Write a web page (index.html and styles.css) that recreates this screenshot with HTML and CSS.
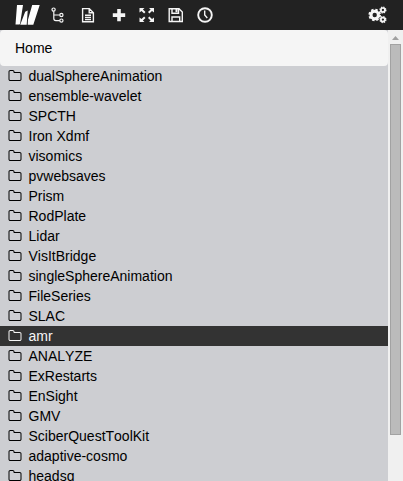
FILE: index.html
```
<!DOCTYPE html>
<html lang="en">
<head>
<meta charset="utf-8">
<title>Files</title>
<link rel="stylesheet" href="styles.css">
</head>
<body>
<svg class="defs" aria-hidden="true">
  <symbol id="folder" viewBox="0 0 1792 1792"><path d="M1600 1312v-704q0-40-28-68t-68-28h-704q-40 0-68-28t-28-68v-64q0-40-28-68t-68-28h-320q-40 0-68 28t-28 68v960q0 40 28 68t68 28h1216q40 0 68-28t28-68zm128-704v704q0 92-66 158t-158 66h-1216q-92 0-158-66t-66-158v-960q0-92 66-158t158-66h320q92 0 158 66t66 158v32h672q92 0 158 66t66 158z"/></symbol>
</svg>
<header class="toolbar">
  <svg class="logo" viewBox="0 0 26 20"><path d="M2 0H8L5.200 18.300 4.600 19.500H.5zM10.200 6.800L12.700 5.500 11.700 19.700H5.200zM17.200 0H24.700L18.300 19.700H12.700L12.900 15z"/></svg>
  <svg class="icon tree" viewBox="0 0 14 16"><g class="line"><circle cx="2.600" cy="2.600" r="1.600"/><circle cx="10.400" cy="8" r="1.600"/><circle cx="10.400" cy="13.600" r="1.600"/><path d="M2.800 4.300v7.300q0 2 2 2h4M2.800 8h6"/></g></svg>
  <svg class="icon doc" viewBox="0 0 14 16"><g class="line"><path d="M1.600 1.600h6.700l4.100 4.100v9h-10.800zM8.200 1.600v4.200h4.200M4 8.300h6M4 10.400h6M4 12.500h6"/></g></svg>
  <svg class="icon plus" viewBox="0 0 14 16"><path d="M5.200 2h3.600v4.300h4.400V10H8.800v4.200H5.200V10H.8V6.300h4.400z"/></svg>
  <svg class="icon expand" viewBox="0 0 16 16"><path d="M.5 1h5L3.900 2.600l2.600 2.500-1.400 1.400-2.600-2.600L.5 5.500zM15 1v4.500l-2-1.600-2.600 2.600L9 5.100l2.600-2.500L10 1zM.5 15v-4.500l2 1.600 2.600-2.600 1.400 1.400-2.600 2.500L5.500 15zM15 15h-5l1.600-1.600L9 10.900l1.400-1.400 2.600 2.600 2-1.600z"/></svg>
  <svg class="icon save" viewBox="0 0 16 16"><g class="line"><path d="M1.200 1.700h9.800l3.300 3.300v9.500H1.200zM4 1.700v4.600h6.500V1.700M4 14.500v-4.500h7.700v4.500"/></g><path d="M7.500 2h2v3.200h-2z"/></svg>
  <svg class="icon clock" viewBox="0 0 16 16"><circle class="ring" cx="8" cy="8" r="6.800"/><path class="line" d="M7.700 3.500V8l2.600 3"/></svg>
  <svg class="icon cogs" viewBox="0 0 20 18"><circle class="teeth" cx="6.700" cy="9" r="5.300"/><circle class="gear" cx="6.700" cy="9" r="3.700"/><circle class="small-teeth" cx="14.900" cy="4" r="2.900"/><circle class="small-gear" cx="14.900" cy="4" r="2"/><circle class="small-teeth" cx="14.900" cy="13.600" r="2.900"/><circle class="small-gear" cx="14.900" cy="13.600" r="2"/></svg>
</header>
<main class="browser">
  <div class="content">
    <nav class="breadcrumb">Home</nav>
    <ul class="files">
      <li><svg><use href="#folder"/></svg>dualSphereAnimation</li>
      <li><svg><use href="#folder"/></svg>ensemble-wavelet</li>
      <li><svg><use href="#folder"/></svg>SPCTH</li>
      <li><svg><use href="#folder"/></svg>Iron Xdmf</li>
      <li><svg><use href="#folder"/></svg>visomics</li>
      <li><svg><use href="#folder"/></svg>pvwebsaves</li>
      <li><svg><use href="#folder"/></svg>Prism</li>
      <li><svg><use href="#folder"/></svg>RodPlate</li>
      <li><svg><use href="#folder"/></svg>Lidar</li>
      <li><svg><use href="#folder"/></svg>VisItBridge</li>
      <li><svg><use href="#folder"/></svg>singleSphereAnimation</li>
      <li><svg><use href="#folder"/></svg>FileSeries</li>
      <li><svg><use href="#folder"/></svg>SLAC</li>
      <li class="active"><svg><use href="#folder"/></svg>amr</li>
      <li><svg><use href="#folder"/></svg>ANALYZE</li>
      <li><svg><use href="#folder"/></svg>ExRestarts</li>
      <li><svg><use href="#folder"/></svg>EnSight</li>
      <li><svg><use href="#folder"/></svg>GMV</li>
      <li><svg><use href="#folder"/></svg>SciberQuestToolKit</li>
      <li><svg><use href="#folder"/></svg>adaptive-cosmo</li>
      <li><svg><use href="#folder"/></svg>headsq</li>
    </ul>
  </div>
  <div class="scrollbar">
    <svg class="arrow" viewBox="0 0 7 4"><path d="M3.500 0L7 4H0z"/></svg>
    <div class="thumb"></div>
  </div>
</main>
</body>
</html>
```
FILE: styles.css
```
* { box-sizing: border-box; }
body {
  margin: 0;
  height: 481px;
  overflow: hidden;
  display: flex;
  flex-direction: column;
  font: 14px/20px "Liberation Sans", Arial, sans-serif;
  font-kerning: none;
  color: #000;
  background: #cdced2;
}
.defs { display: none; }
.toolbar {
  height: 30px;
  flex: none;
  display: flex;
  align-items: center;
  padding: 0 15px;
  background: #222;
  fill: #f5f5f5;
}
.toolbar svg { flex: none; }
.logo { width: 26px; height: 20px; fill: #fff; }
.icon { height: 16px; }
.line { fill: none; stroke: #f5f5f5; stroke-width: 1.4; }
.ring { fill: none; stroke: #f5f5f5; stroke-width: 1.9; }
.tree { width: 14px; margin-left: 10px; }
.tree .line { stroke-width: 1.2; }
.doc { width: 14px; margin-left: 16px; }
.plus { width: 14px; margin-left: 17px; }
.expand { width: 16px; margin-left: 13px; }
.save { width: 16px; margin-left: 13px; }
.clock { width: 16px; margin-left: 13px; }
.cogs { width: 20px; height: 18px; margin: 0 0 1px auto; fill: none; stroke: #f5f5f5; }
.teeth { stroke-width: 2; stroke-dasharray: 2.380 1.780; }
.gear { stroke-width: 3; }
.small-teeth { stroke-width: 1.4; stroke-dasharray: 1.280 1; }
.small-gear { stroke-width: 1.7; }
.browser { flex: 1; min-height: 0; display: flex; }
.content { flex: 1; overflow: hidden; }
.breadcrumb {
  height: 36px;
  padding: 8px 15px;
  background: #f5f5f5;
  border-radius: 4px;
}
.files { list-style: none; margin: 0; padding: 0; }
.files li {
  height: 20px;
  display: flex;
  padding-left: 7.5px;
}
.files svg { width: 14px; height: 14px; margin: 3px 7px 0 0; fill: currentColor; }
.files .active { background: #333; color: #f5f5f5; }
.scrollbar {
  width: 15px;
  display: flex;
  flex-direction: column;
  align-items: center;
  background: #f0f0f0;
}
.arrow { width: 7px; height: 4px; margin: 6px 0 4px; fill: #a0a0a0; }
.thumb {
  width: 11px;
  height: 391px;
  background: #bbb;
  border: 1px solid #a2a2a2;
}
```
